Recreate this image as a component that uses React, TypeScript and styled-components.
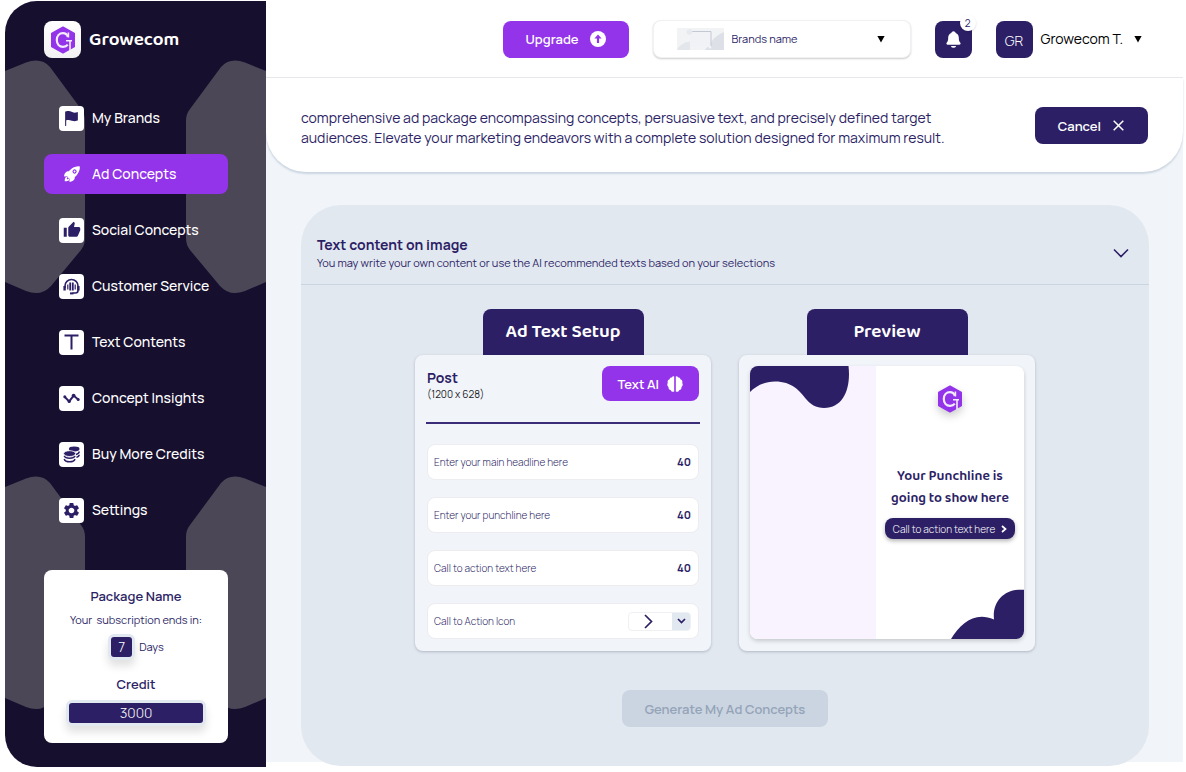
import React from "react";
import styled, { createGlobalStyle, css } from "styled-components";
import { IoFlag, IoRocket, IoNotifications } from "react-icons/io5";
import { MdThumbUp, MdSettings } from "react-icons/md";

const color = {
  night: "#170f2e",
  shape: "#4c4757",
  indigo: "#2d1f66",
  purple: "#9333ea",
  page: "#f1f5f9",
  panel: "#e2e8f0",
  line: "#cbd5e1",
  muted: "#94a3b8",
};

const display = `"Baloo 2", "Noto Sans", "Open Sans", sans-serif`;

const Global = createGlobalStyle`
  *, *::before, *::after { box-sizing: border-box; }
  body {
    margin: 0;
    background: #fff;
    color: ${color.indigo};
    font-family: Manrope, Inter, "Liberation Sans", sans-serif;
    font-size: 14px;
    line-height: 20px;
  }
  button, input, select { font: inherit; color: inherit; }
  button { cursor: pointer; border: 0; }
  h1, h2, h3, p, ul { margin: 0; padding: 0; }
  svg { display: block; flex: none; }
`;

const Shell = styled.div`
  display: flex;
  align-items: flex-start;
  padding: 1px 3px 5px 5px;
`;

/* ---------- sidebar ---------- */

const Sidebar = styled.aside`
  position: relative;
  flex: none;
  width: 261px;
  padding: 20px 38px 24px 39px;
  border-radius: 32px 0 0 32px;
  background: ${color.night};
  color: #fff;
  overflow: hidden;
`;

const Backdrop = styled.svg`
  position: absolute;
  inset: 0;
`;

const SidebarBody = styled.div`
  position: relative;
`;

const BrandRow = styled.a`
  display: flex;
  align-items: center;
  gap: 8px;
  color: #fff;
  text-decoration: none;
  font-family: ${display};
  font-weight: 600;
  font-size: 19px;
`;

const LogoTile = styled.span`
  display: grid;
  place-items: center;
  width: 37px;
  height: 37px;
  border-radius: 8px;
  background: linear-gradient(#fff, #f1f1f3);
`;

const Nav = styled.nav`
  display: flex;
  flex-direction: column;
  gap: 16px;
  margin-top: 40px;
`;

const NavLink = styled.a<{ $active?: boolean }>`
  display: flex;
  align-items: center;
  gap: 8px;
  height: 40px;
  padding-left: 15px;
  border-radius: 8px;
  color: #fff;
  font-weight: 500;
  text-decoration: none;
  white-space: nowrap;
  ${(p) => p.$active && css`background: ${color.purple};`}
`;

const NavIcon = styled.span<{ $active?: boolean }>`
  display: grid;
  place-items: center;
  width: 25px;
  height: 25px;
  border-radius: 4px;
  color: ${(p) => (p.$active ? "#fff" : color.indigo)};
  background: ${(p) => (p.$active ? "transparent" : "#fff")};
`;

const PackageCard = styled.section`
  display: flex;
  flex-direction: column;
  align-items: center;
  margin-top: 40px;
  padding: 16px 20px 13px;
  border-radius: 8px;
  background: #fff;
  color: ${color.indigo};
`;

const PackageTitle = styled.h2`
  font-size: 13px;
  line-height: 20px;
  font-weight: 600;
`;

const PackageNote = styled.p`
  margin-top: 4px;
  font-size: 11px;
  line-height: 20px;
  white-space: pre;
`;

const DaysRow = styled.p`
  display: flex;
  align-items: center;
  gap: 4px;
  margin: 4px 0 14px;
  font-size: 11px;
`;

const Badge = styled.span<{ $wide?: boolean }>`
  display: block;
  width: ${(p) => (p.$wide ? "100%" : "27px")};
  border: 3px solid ${color.panel};
  border-radius: 6px;
  background: ${color.indigo};
  color: #fff;
  font-size: 14px;
  line-height: 20px;
  font-weight: 300;
  text-align: center;
  box-shadow: 0 6px 8px rgba(0, 0, 0, 0.12);
`;

const CreditMeter = styled.div`
  width: 100%;
  padding: 6px 2px 4px;
`;

/* ---------- main ---------- */

const Main = styled.div`
  flex: 1;
  min-width: 0;
  background: ${color.page};
`;

const TopBar = styled.header`
  display: flex;
  justify-content: flex-end;
  align-items: center;
  gap: 24px;
  height: 77px;
  padding-right: 41px;
  border-bottom: 1px solid #e5e7eb;
  background: #fff;
`;

const SolidButton = styled.button<{ $tone: string; $small?: boolean }>`
  display: flex;
  align-items: center;
  justify-content: center;
  gap: ${(p) => (p.$small ? 8 : 11)}px;
  height: ${(p) => (p.$small ? 35 : 37)}px;
  padding: 0 ${(p) => (p.$small ? 16 : 23)}px;
  border-radius: 8px;
  background: ${(p) => p.$tone};
  color: #fff;
  font-size: 13px;
  font-weight: 600;
  white-space: nowrap;
  &:disabled {
    color: ${color.muted};
    cursor: default;
  }
`;

const BrandPicker = styled.label`
  display: flex;
  align-items: center;
  gap: 8px;
  width: 258px;
  height: 38px;
  padding: 0 25px 0 23px;
  border: 1px solid #f1f1f3;
  border-radius: 8px;
  background: #fff;
  box-shadow: 0 1px 2px rgba(0, 0, 0, 0.2);
`;

const BrandSelect = styled.select`
  flex: 1;
  min-width: 0;
  padding: 0;
  border: 0;
  background: transparent;
  appearance: none;
  font-size: 11px;
`;

const Tile = styled.button`
  position: relative;
  display: grid;
  place-items: center;
  width: 37px;
  height: 37px;
  padding: 0;
  border-radius: 8px;
  background: ${color.indigo};
  color: #fff;
`;

const Count = styled.span`
  position: absolute;
  top: -6px;
  right: -4px;
  width: 16px;
  height: 16px;
  border-radius: 8px;
  background: #fff;
  color: ${color.indigo};
  font-size: 10px;
  line-height: 16px;
  box-shadow: 0 1px 2px rgba(0, 0, 0, 0.15);
`;

const Account = styled.button`
  display: flex;
  align-items: center;
  gap: 8px;
  padding: 0;
  background: none;
  color: #000;
`;

const Initials = styled.span`
  width: 37px;
  height: 37px;
  border-radius: 8px;
  background: ${color.indigo};
  color: #fff;
  font-weight: 300;
  line-height: 39px;
`;

const AccountName = styled.span`
  margin-right: 3px;
`;

const Intro = styled.section`
  display: flex;
  align-items: flex-start;
  justify-content: space-between;
  padding: 29px 35px 24px 35px;
  border-radius: 0 0 40px 40px;
  background: #fff;
  box-shadow: 0 2px 2px ${color.line};
`;

const IntroText = styled.p`
  padding-top: 1px;
  max-width: 670px;
`;

const Panel = styled.section`
  display: flex;
  flex-direction: column;
  align-items: center;
  margin: 33px 34px -4px 35px;
  padding-bottom: 39px;
  border-radius: 40px;
  background: ${color.panel};
`;

const PanelHead = styled.header`
  display: flex;
  align-items: center;
  justify-content: space-between;
  align-self: stretch;
  padding: 30px 20px 13px 16px;
  border-bottom: 1px solid ${color.line};
`;

const PanelTitle = styled.h1`
  font-size: 14px;
  line-height: 20px;
  font-weight: 700;
`;

const PanelNote = styled.p`
  font-size: 11px;
  line-height: 16px;
`;

const IconButton = styled.button`
  padding: 0;
  background: none;
`;

const Columns = styled.div`
  display: flex;
  flex-wrap: wrap;
  justify-content: center;
  gap: 28px;
  margin: 24px 0 39px;
`;

const Column = styled.section`
  display: flex;
  flex-direction: column;
  align-items: center;
  width: 296px;
`;

const Tab = styled.h2`
  width: 161px;
  border-radius: 8px 8px 0 0;
  background: ${color.indigo};
  color: #fff;
  font-family: ${display};
  font-size: 19px;
  line-height: 46px;
  font-weight: 600;
  text-align: center;
`;

const Card = styled.div`
  width: 100%;
  height: 296px;
  padding: 11px;
  border-radius: 8px;
  background: ${color.page};
  box-shadow: 0 1px 3px rgba(30, 41, 59, 0.25);
`;

const CardHead = styled.header`
  display: flex;
  align-items: flex-start;
  justify-content: space-between;
  height: 58px;
  padding: 0 1px;
  margin-bottom: 20px;
  border-bottom: 2px solid #3b2c7a;
`;

const PostTitle = styled.h3`
  padding-top: 2px;
  font-size: 14px;
  line-height: 20px;
  font-weight: 700;
`;

const PostSize = styled.p`
  color: #1c1c28;
  font-size: 10px;
  line-height: 12px;
`;

const Fields = styled.div`
  display: flex;
  flex-direction: column;
  gap: 17px;
  padding: 0 1px;
`;

const Field = styled.label`
  display: flex;
  align-items: center;
  justify-content: space-between;
  height: 36px;
  padding: 0 7px 0 6px;
  border: 1px solid #ececf0;
  border-radius: 8px;
  background: #fff;
  font-size: 10px;
  font-weight: 300;
`;

const FieldInput = styled.input`
  flex: 1;
  min-width: 0;
  padding: 0;
  border: 0;
  outline: 0;
  background: transparent;
  &::placeholder { color: ${color.indigo}; opacity: 1; }
`;

const Limit = styled.span`
  font-size: 11px;
  font-weight: 700;
`;

const IconPicker = styled.span`
  position: relative;
  display: flex;
  width: 63px;
  height: 19px;
  border: 1px solid #eef0f4;
  border-radius: 4px;
  overflow: hidden;
`;

const IconSelect = styled.select`
  position: absolute;
  inset: 0;
  width: 100%;
  opacity: 0;
`;

const IconShown = styled.span`
  display: grid;
  place-items: center;
  flex: 1;
  padding-right: 4px;
`;

const IconArrow = styled.span`
  display: grid;
  place-items: center;
  width: 18px;
  background: ${color.panel};
`;

const Preview = styled.div`
  position: relative;
  display: flex;
  height: 273px;
  border-radius: 8px;
  background: #fff;
  overflow: hidden;
`;

const PreviewFrame = styled.div`
  border-radius: 8px;
  box-shadow: 0 2px 4px rgba(0, 0, 0, 0.18);
`;

const PreviewImage = styled.div`
  width: 126px;
  background: #f8f3ff;
`;

const PreviewText = styled.div`
  position: relative;
  flex: 1;
  display: flex;
  flex-direction: column;
  align-items: center;
  padding-top: 19px;
`;

const Punchline = styled.p`
  margin: 52px 0 9px;
  font-family: ${display};
  font-size: 14px;
  line-height: 22px;
  font-weight: 600;
  text-align: center;
`;

const CallToAction = styled.button`
  display: flex;
  align-items: center;
  gap: 6px;
  height: 21px;
  padding: 0 8px;
  border-radius: 8px;
  background: ${color.indigo};
  color: #fff;
  font-size: 10px;
  font-weight: 300;
  white-space: nowrap;
  box-shadow: 0 2px 4px rgba(0, 0, 0, 0.3);
`;

const Blob = styled.svg<{ $corner: "start" | "end" }>`
  position: absolute;
  ${(p) => (p.$corner === "start" ? css`top: 0; left: 0;` : css`right: 0; bottom: 0;`)}
`;

/* ---------- drawings ---------- */

const LogoDrawing = styled.svg<{ $raised?: boolean }>`
  ${(p) => p.$raised && css`filter: drop-shadow(0 4px 4px rgba(0, 0, 0, 0.2));`}
`;

const Logo = ({ raised }: { raised?: boolean }) => (
  <LogoDrawing $raised={raised} width="26" height="28" viewBox="0 0 26 28" aria-hidden="true">
    <path d="M13 1.2 24.2 7.4V20.6L13 26.8 1.8 20.6V7.4Z" fill={color.purple} stroke={color.purple} strokeWidth="1.6" strokeLinejoin="round" />
    <path d="M17.8 10.8C17 8.4 15.2 7.2 13 7.2 9.4 7.2 6.8 10 6.8 14S9.4 20.8 13 20.8C15.2 20.8 16.8 20 17.8 18.6" fill="none" stroke="#f3ebff" strokeWidth="2.2" />
    <path d="M18.4 6.6V11.6M16 14.8H22M20 14.8V24.5" fill="none" stroke="#f3ebff" strokeWidth="1.6" />
  </LogoDrawing>
);

const wing = "M0 70 21 61.5Q36 56 45 66L76 108Q80 113 80 120V237Q80 244 76 249L46 285Q36 296 21 290L0 281Z";

const Wings = () => (
  <Backdrop width="261" height="766" viewBox="0 0 261 766" fill={color.shape} aria-hidden="true">
    <path d={wing} />
    <path d={wing} transform="translate(0 416)" />
    <path d={wing} transform="translate(261 0) scale(-1 1)" />
    <path d={wing} transform="translate(261 416) scale(-1 1)" />
  </Backdrop>
);

const Headset = () => (
  <svg width="17" height="17" viewBox="0 0 17 17" fill="none" stroke="currentColor" aria-hidden="true">
    <path d="M2 10V8a6.5 6.5 0 0 1 13 0v4.5q0 2.5-2.5 2.5H9.5" strokeWidth="1.6" />
    <path d="M1.6 8V12.4M15.4 8V12.4" strokeWidth="2.4" />
    <path d="M4.8 6.4V11.4M12.2 6.4V11.4" strokeWidth="1.2" />
    <path d="M7.2 4.4V12.4M9.8 4.4V12.4" strokeWidth="1.8" />
    <path d="M7 15.4H10.5" strokeWidth="2" />
  </svg>
);

const TextMark = () => (
  <svg width="15" height="16" viewBox="0 0 15 16" fill="none" stroke="currentColor" strokeWidth="2" aria-hidden="true">
    <path d="M.5 1.500H14.500M7.500 1.500V15.500" />
  </svg>
);

const Coins = () => (
  <svg width="17" height="17" viewBox="0 0 17 17" aria-hidden="true">
    <ellipse cx="11.200" cy="3" rx="5.300" ry="2.400" fill="currentColor" />
    <g fill="none" stroke="currentColor" strokeWidth="1.500">
      <path d="M13 8.400Q16.200 7.600 16.200 5.600" />
      <path d="M13.400 11.400Q16.200 10.600 16.200 8.800" />
      <path d="M1.200 9.800Q2 12.200 6.600 12.200T12 9.800" />
      <path d="M1.200 13Q2 15.800 6.600 15.800T12 13" />
    </g>
    <ellipse cx="6.600" cy="7.600" rx="6" ry="2.900" fill="currentColor" stroke="#fff" strokeWidth=".8" />
  </svg>
);

const Insights = () => (
  <svg width="17" height="11" viewBox="0 0 17 11" aria-hidden="true">
    <path d="M1.8 4 6.2 8.4 10.6 2.6 15.2 6.4" fill="none" stroke="currentColor" strokeWidth="2" />
    <g fill="currentColor">
      <circle cx="1.8" cy="3.8" r="1.5" />
      <circle cx="6.2" cy="8.4" r="1.6" />
      <circle cx="10.6" cy="2.6" r="1.9" />
      <circle cx="15.2" cy="6.4" r="1.5" />
    </g>
  </svg>
);

const UpArrow = () => (
  <svg width="16" height="16" viewBox="0 0 16 16" aria-hidden="true">
    <circle cx="8" cy="8" r="8" fill="#fff" />
    <path d="M8 3.6 11.6 7.4H9.1V12H6.9V7.4H4.4Z" fill={color.purple} />
  </svg>
);

const Brain = () => (
  <svg width="16" height="16" viewBox="0 0 16 16" fill="currentColor" aria-hidden="true">
    <path d="M7.2.6V15.4C5.6 16.4 4 15.4 3.6 14 2 13.8 1.2 12.4 1.6 11 0 10 0 8 .8 7 .2 5.400 1 4 2.400 3.600 2.600 2 3.800 1.400 4.800 1.500 5.400.3 6.600 0 7.200.6Z" />
    <path d="M8.800.6V15.4C10.400 16.4 12 15.4 12.400 14 14 13.8 14.800 12.4 14.400 11 16 10 16 8 15.200 7 15.800 5.400 15 4 13.600 3.600 13.400 2 12.200 1.400 11.200 1.500 10.600.3 9.400 0 8.800.6Z" />
  </svg>
);

const Triangle = () => (
  <svg width="8" height="8" viewBox="0 0 8 8" aria-hidden="true">
    <path d="M.4 1H7.600L4 7.400Z" fill="#000" />
  </svg>
);

const Cross = () => (
  <svg width="13" height="11" viewBox="0 0 13 11" fill="none" stroke="currentColor" strokeWidth="1.5" aria-hidden="true">
    <path d="M1.700.7 11.300 10.300M11.300.7 1.700 10.300" />
  </svg>
);

const Chevron = ({ w, h, d, weight }: { w: number; h: number; d: string; weight: number }) => (
  <svg width={w} height={h} viewBox={`0 0 ${w} ${h}`} fill="none" stroke="currentColor" strokeWidth={weight} aria-hidden="true">
    <path d={d} />
  </svg>
);

const BrandThumb = () => (
  <svg width="47" height="22" viewBox="0 0 47 22" aria-hidden="true">
    <rect width="47" height="22" fill="#f1f3f5" />
    <path d="M0 22Q3 15 13 13.500V22Z" fill="#e3e6eb" />
    <path d="M28 22 35 13Q38 8 47 4V22Z" fill="#dde1e7" />
    <rect x="13" y="4" width="21" height="15" fill="#f1f2f5" />
    <path d="M15 3.500H34V19" fill="none" stroke="#c3c9d4" />
    <circle cx="12.500" cy="4" r="2.800" fill="#e6e9ee" />
    <circle cx="33" cy="19" r="1.500" fill="#f1f3f6" />
  </svg>
);

/* ---------- page ---------- */

const links = [
  { label: "My Brands", icon: <IoFlag size={17} /> },
  { label: "Ad Concepts", icon: <IoRocket size={18} />, active: true },
  { label: "Social Concepts", icon: <MdThumbUp size={18} /> },
  { label: "Customer Service", icon: <Headset /> },
  { label: "Text Contents", icon: <TextMark /> },
  { label: "Concept Insights", icon: <Insights /> },
  { label: "Buy More Credits", icon: <Coins /> },
  { label: "Settings", icon: <MdSettings size={19} /> },
];

const fields = ["Enter your main headline here", "Enter your punchline here", "Call to action text here"];

export default function App() {
  return (
    <>
      <Global />
      <Shell>
        <Sidebar>
          <Wings />
          <SidebarBody>
            <BrandRow href="#">
              <LogoTile><Logo /></LogoTile>
              Growecom
            </BrandRow>
            <Nav>
              {links.map((l) => (
                <NavLink key={l.label} href="#" $active={l.active}>
                  <NavIcon $active={l.active}>{l.icon}</NavIcon>
                  {l.label}
                </NavLink>
              ))}
            </Nav>
            <PackageCard>
              <PackageTitle>Package Name</PackageTitle>
              <PackageNote>{"Your  subscription ends in:"}</PackageNote>
              <DaysRow><Badge>7</Badge>Days</DaysRow>
              <PackageTitle>Credit</PackageTitle>
              <CreditMeter><Badge $wide>3000</Badge></CreditMeter>
            </PackageCard>
          </SidebarBody>
        </Sidebar>

        <Main>
          <TopBar>
            <SolidButton $tone={color.purple}>Upgrade <UpArrow /></SolidButton>
            <BrandPicker>
              <BrandThumb />
              <BrandSelect aria-label="Brand"><option>Brands name</option></BrandSelect>
              <Triangle />
            </BrandPicker>
            <Tile aria-label="Notifications">
              <IoNotifications size={19} />
              <Count>2</Count>
            </Tile>
            <Account>
              <Initials>GR</Initials>
              <AccountName>Growecom T.</AccountName>
              <Triangle />
            </Account>
          </TopBar>

          <Intro>
            <IntroText>
              comprehensive ad package encompassing concepts, persuasive text, and precisely defined target
              <br />
              audiences. Elevate your marketing endeavors with a complete solution designed for maximum result.
            </IntroText>
            <SolidButton $tone={color.indigo}>Cancel <Cross /></SolidButton>
          </Intro>

          <Panel>
            <PanelHead>
              <div>
                <PanelTitle>Text content on image</PanelTitle>
                <PanelNote>You may write your own content or use the AI recommended texts based on your selections</PanelNote>
              </div>
              <IconButton aria-label="Collapse section">
                <Chevron w={16} h={10} d="M1 1.500 8 8.500 15 1.500" weight={1.6} />
              </IconButton>
            </PanelHead>

            <Columns>
              <Column>
                <Tab>Ad Text Setup</Tab>
                <Card>
                  <CardHead>
                    <div>
                      <PostTitle>Post</PostTitle>
                      <PostSize>(1200 x 628)</PostSize>
                    </div>
                    <SolidButton $tone={color.purple} $small>Text AI <Brain /></SolidButton>
                  </CardHead>
                  <Fields>
                    {fields.map((f) => (
                      <Field key={f}>
                        <FieldInput placeholder={f} maxLength={40} />
                        <Limit>40</Limit>
                      </Field>
                    ))}
                    <Field>
                      Call to Action Icon
                      <IconPicker>
                        <IconShown><Chevron w={9} h={15} d="M1 1 7.500 7.500 1 14" weight={1.7} /></IconShown>
                        <IconArrow><Chevron w={9} h={6} d="M1 1 4.500 4.500 8 1" weight={1.7} /></IconArrow>
                        <IconSelect><option>Chevron</option></IconSelect>
                      </IconPicker>
                    </Field>
                  </Fields>
                </Card>
              </Column>

              <Column>
                <Tab>Preview</Tab>
                <Card>
                  <PreviewFrame>
                    <Preview>
                      <PreviewImage />
                      <Blob $corner="start" width="100" height="43" viewBox="0 0 100 43" fill={color.indigo} aria-hidden="true">
                        <path d="M0 0H98.500C101 22 94 42 74 42 66 42 60 38 56 33 50 25 42 15.500 25 15.500 14 15.500 6 20 0 26Z" />
                      </Blob>
                      <Blob $corner="end" width="73" height="50" viewBox="0 0 73 50" fill={color.indigo} aria-hidden="true">
                        <path d="M0 50C10 34 24 22 43 30.500 41 12 54-1 73 .8V50Z" />
                      </Blob>
                      <PreviewText>
                        <Logo raised />
                        <Punchline>Your Punchline is<br />going to show here</Punchline>
                        <CallToAction>
                          Call to action text here
                          <Chevron w={6} h={8} d="M1 1 4.500 4 1 7" weight={1.7} />
                        </CallToAction>
                      </PreviewText>
                    </Preview>
                  </PreviewFrame>
                </Card>
              </Column>
            </Columns>

            <SolidButton $tone={color.line} disabled>Generate My Ad Concepts</SolidButton>
          </Panel>
        </Main>
      </Shell>
    </>
  );
}
